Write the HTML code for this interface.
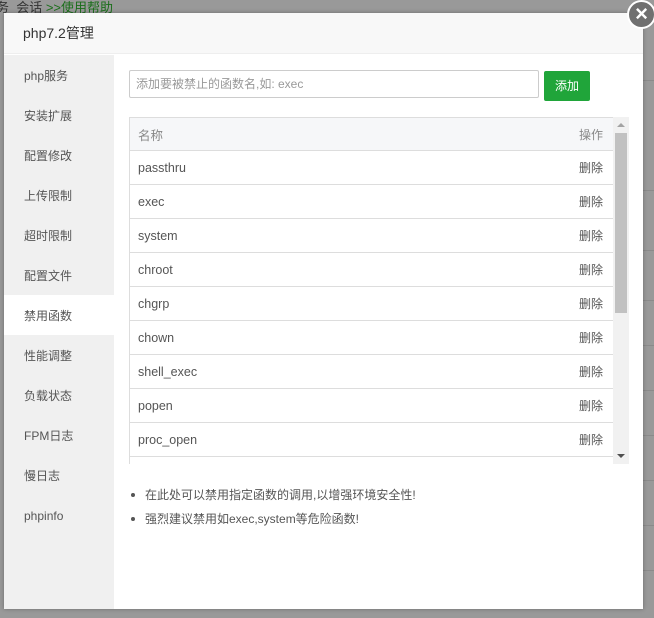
<!DOCTYPE html>
<html><head><meta charset="utf-8"><style>
*{margin:0;padding:0;box-sizing:border-box}
body{width:654px;height:618px;background:#999;position:relative;overflow:hidden;font-family:"Liberation Sans","Noto Sans CJK SC",sans-serif;font-size:12px;color:#555}
.bgtxt{position:absolute;left:-4px;top:-3px;font-size:13px;color:#333;white-space:nowrap}
.bgtxt span{color:#1a6e1a}
.line{position:absolute;left:643px;width:11px;height:1px;background:#8a8a8a}
.modal{position:absolute;left:4px;top:13px;width:639px;height:596px;background:#fff;box-shadow:0 0 4px rgba(0,0,0,.3)}
.hd{height:41px;background:#f8f8f8;border-bottom:1px solid #eee;padding-left:19px;line-height:41px;font-size:14px;color:#333}
.side{position:absolute;left:0;top:42px;width:110px;bottom:0;background:#f0f0f0}
.side div{height:40px;line-height:42px;padding-left:20px;font-size:12px;color:#555}
.side div.on{background:#fff}
.inp{position:absolute;left:125px;top:57px;width:410px;height:28px;border:1px solid #ccc;border-radius:2px;padding-left:6px;line-height:26px;color:#999;font-size:12px}
.btn{position:absolute;left:540px;top:58px;width:46px;height:30px;background:#20a53a;color:#fff;border-radius:2px;text-align:center;line-height:30px;font-size:12px}
.tbl{position:absolute;left:125px;top:104px;width:484px;height:347px;overflow:hidden;border-left:1px solid #ddd}
.row{height:34px;border-bottom:1px solid #ddd;display:flex;justify-content:space-between;align-items:center;padding:0 10px 0 8px;color:#555;font-size:12.5px}
.row span{color:#555;font-size:12px}
.th{background:#f6f7f9;color:#888;border-top:1px solid #ddd}
.th span{color:#888}
.sb{position:absolute;left:609px;top:104px;width:16px;height:347px;background:#f1f1f1}
.sb .t{position:absolute;left:2px;top:16px;width:12px;height:180px;background:#c1c1c1}
.up,.dn{position:absolute;left:4px;width:0;height:0;border-left:4px solid transparent;border-right:4px solid transparent}
.up{top:6px;border-bottom:4px solid #a3a3a3}
.dn{bottom:6px;border-top:4px solid #505050}
ul{position:absolute;left:141px;top:470px;list-style:none;font-size:12px;color:#555}
ul li{height:24px;line-height:24px;position:relative}
ul li:before{content:"";position:absolute;left:-14px;top:10px;width:4px;height:4px;border-radius:50%;background:#555}
.close{position:absolute;left:627px;top:0;width:29px;height:29px;border-radius:50%;background:#707070;border:2px solid #fff;color:#fff;text-align:center;line-height:24px;font-size:22px;font-weight:bold}
</style></head><body>
<div class="bgtxt">务&nbsp;&nbsp;会话 <span>&gt;&gt;使用帮助</span></div>
<div class="line" style="top:80px"></div><div class="line" style="top:190px"></div><div class="line" style="top:250px"></div><div class="line" style="top:300px"></div><div class="line" style="top:345px"></div><div class="line" style="top:390px"></div><div class="line" style="top:435px"></div><div class="line" style="top:480px"></div><div class="line" style="top:525px"></div><div class="line" style="top:570px"></div>
<div class="modal">
<div class="hd">php7.2管理</div>
<div class="side">
<div>php服务</div><div>安装扩展</div><div>配置修改</div><div>上传限制</div><div>超时限制</div><div>配置文件</div><div class="on">禁用函数</div><div>性能调整</div><div>负载状态</div><div>FPM日志</div><div>慢日志</div><div>phpinfo</div>
</div>
<div class="inp">添加要被禁止的函数名,如: exec</div>
<div class="btn">添加</div>
<div class="tbl">
<div class="row th">名称<span>操作</span></div>
<div class="row">passthru<span>删除</span></div>
<div class="row">exec<span>删除</span></div>
<div class="row">system<span>删除</span></div>
<div class="row">chroot<span>删除</span></div>
<div class="row">chgrp<span>删除</span></div>
<div class="row">chown<span>删除</span></div>
<div class="row">shell_exec<span>删除</span></div>
<div class="row">popen<span>删除</span></div>
<div class="row">proc_open<span>删除</span></div>
<div class="row">pcntl_exec<span>删除</span></div>
</div>
<div class="sb"><div class="up"></div><div class="t"></div><div class="dn"></div></div>
<ul>
<li>在此处可以禁用指定函数的调用,以增强环境安全性!</li>
<li>强烈建议禁用如exec,system等危险函数!</li>
</ul>
</div>
<div class="close">×</div>
</body></html>
